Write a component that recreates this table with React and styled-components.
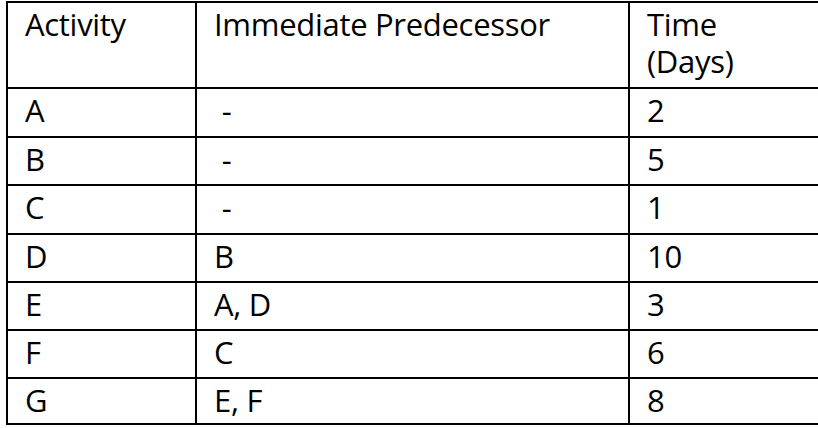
import React from "react";
import styled, { createGlobalStyle } from "styled-components";

const Global = createGlobalStyle`
  html, body { margin: 0; padding: 0; background: #fff; overflow: hidden; }
  body { width: 818px; height: 428px; }
`;

const Page = styled.div`
  padding: 1px 0 0 6px;
  width: 818px;
  height: 428px;
  box-sizing: border-box;
  overflow: hidden;
`;

const Table = styled.table`
  border-collapse: collapse;
  table-layout: fixed;
  width: 860px;
  font-family: "Open Sans", "Noto Sans", sans-serif;
  font-size: 31px;
  font-weight: 500;
  line-height: 37px;
  color: #000;
`;

const Row = styled.tr`
  height: ${(p) => p.$h}px;
`;

const Cell = styled.td`
  border: 2px solid #000;
  padding: 3px 8px 0 17px;
  vertical-align: top;
  white-space: pre;
  box-sizing: border-box;
  letter-spacing: -0.3px;
`;

const rows = [
  ["A", " -", "2"],
  ["B", " -", "5"],
  ["C", " -", "1"],
  ["D", "B", "10"],
  ["E", "A, D", "3"],
  ["F", "C", "6"],
  ["G", "E, F", "8"],
];
const heights = [49, 48, 49, 48, 48, 48, 46];

export default function App() {
  return (
    <Page>
      <Global />
      <Table>
        <colgroup>
          <col style={{ width: 189 }} />
          <col style={{ width: 433 }} />
          <col style={{ width: 238 }} />
        </colgroup>
        <tbody>
          <Row $h={86}>
            <Cell>Activity</Cell>
            <Cell>Immediate Predecessor</Cell>
            <Cell>
              Time
              <br />
              (Days)
            </Cell>
          </Row>
          {rows.map((r, i) => (
            <Row key={r[0]} $h={heights[i]}>
              <Cell>{r[0]}</Cell>
              <Cell>{r[1]}</Cell>
              <Cell>{r[2]}</Cell>
            </Row>
          ))}
        </tbody>
      </Table>
    </Page>
  );
}
